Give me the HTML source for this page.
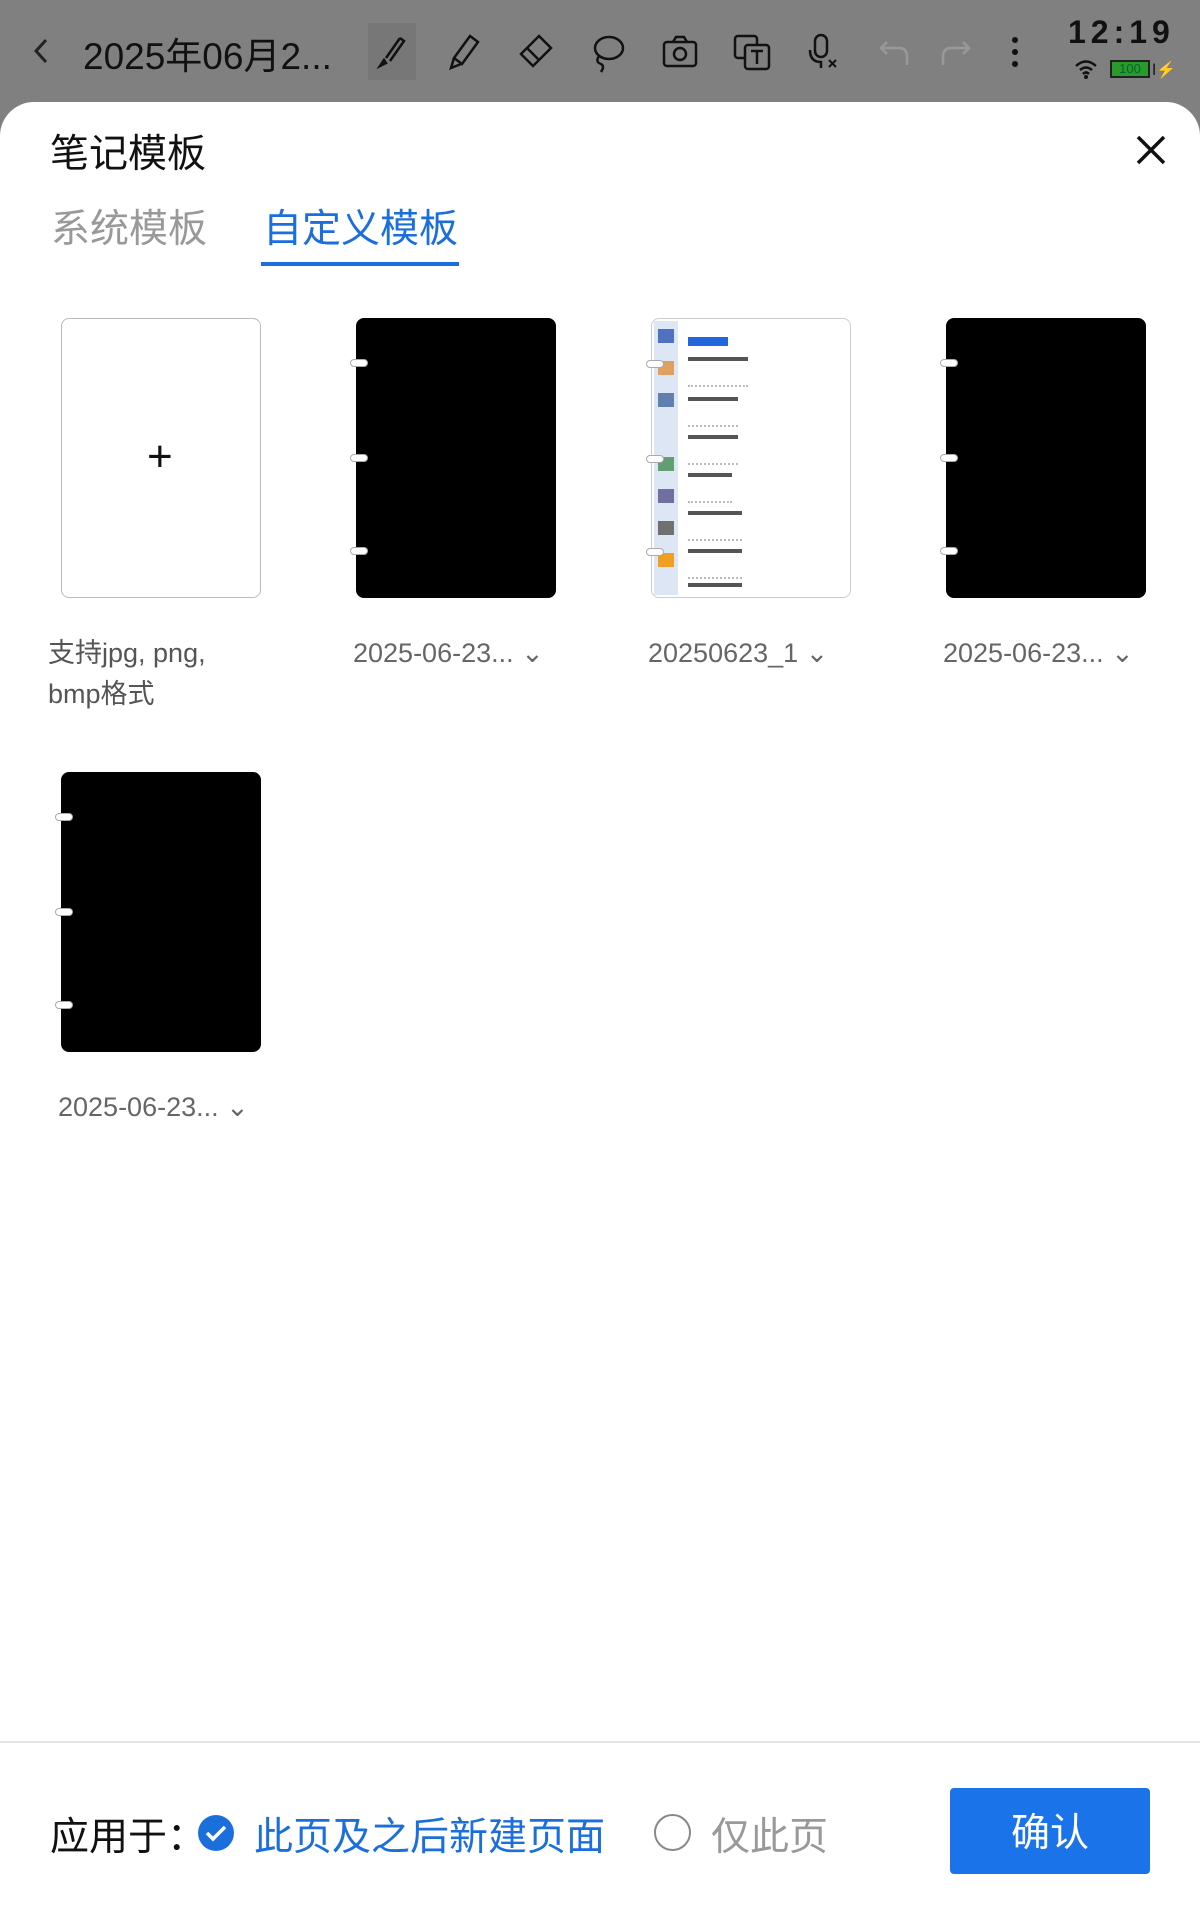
<!DOCTYPE html>
<html><head><meta charset="utf-8"><style>
*{margin:0;padding:0;box-sizing:border-box}
body{width:1200px;height:1920px;position:relative;background:#808080;font-family:"Liberation Sans","Noto Sans CJK SC",sans-serif;overflow:hidden}
.a{position:absolute}
.sheet{position:absolute;left:0;top:102px;width:1200px;height:1818px;background:#fff;border-radius:34px 34px 0 0}
.card{position:absolute;width:200px;height:280px;border-radius:8px}
.blk{background:#000}
.pill{position:absolute;left:-6px;width:18px;height:8px;background:#fff;border-radius:4px;border:1px solid #aaa}
.lbl{position:absolute;font-size:27px;color:#666;white-space:nowrap}
.ic{position:absolute;top:30px;width:44px;height:44px}
svg{display:block}
</style></head><body>
<svg class="a" style="left:30px;top:36px" width="24" height="30" viewBox="0 0 24 30"><path d="M16 4 L6 15 L16 26" stroke="#222" stroke-width="3" fill="none"/></svg>
<div class="a" style="left:83px;top:26px;font-size:37px;color:#111">2025年06月2...</div>
<div class="a" style="left:368px;top:23px;width:48px;height:57px;background:#777"></div>
<svg class="ic" style="left:370px" viewBox="0 0 44 44"><path d="M30 8 L16 28 M14 30 l-4 6 l6 -3 z M30 8 l4 3 l-14 20" stroke="#111" stroke-width="2.5" fill="none"/></svg>
<svg class="ic" style="left:442px" viewBox="0 0 44 44"><path d="M28 6 l8 6 l-16 22 l-8 -6 z M12 28 l-3 10 l10 -4" stroke="#111" stroke-width="2.5" fill="none"/></svg>
<svg class="ic" style="left:513px" viewBox="0 0 44 44"><path d="M26 6 l12 12 l-18 18 l-12 -12 z M14 18 l12 12" stroke="#111" stroke-width="2.5" fill="none"/></svg>
<svg class="ic" style="left:585px" viewBox="0 0 44 44"><ellipse cx="24" cy="18" rx="14" ry="11" stroke="#111" stroke-width="2.5" fill="none"/><path d="M14 26 q-4 6 2 8 q4 2 0 8" stroke="#111" stroke-width="2.5" fill="none"/></svg>
<svg class="ic" style="left:658px" viewBox="0 0 44 44"><rect x="6" y="12" width="32" height="24" rx="3" stroke="#111" stroke-width="2.5" fill="none"/><path d="M15 12 l3-5 h8 l3 5" stroke="#111" stroke-width="2.5" fill="none"/><circle cx="22" cy="24" r="6" stroke="#111" stroke-width="2.5" fill="none"/></svg>
<svg class="ic" style="left:730px" viewBox="0 0 44 44"><rect x="5" y="6" width="22" height="22" rx="3" stroke="#111" stroke-width="2.5" fill="none"/><rect x="15" y="15" width="24" height="24" rx="3" stroke="#111" stroke-width="2.5" fill="#808080"/><path d="M21 21 h12 M27 21 v13" stroke="#111" stroke-width="2.5"/></svg>
<svg class="ic" style="left:801px" viewBox="0 0 44 44"><rect x="14" y="5" width="12" height="22" rx="6" stroke="#111" stroke-width="2.5" fill="none"/><path d="M9 20 q0 12 11 12 v6" stroke="#111" stroke-width="2.5" fill="none"/><path d="M28 30 l7 7 M35 30 l-7 7" stroke="#111" stroke-width="2"/></svg>
<svg class="ic" style="left:873px" viewBox="0 0 44 44"><path d="M14 12 l-6 6 l6 6 M8 18 h18 q8 0 8 9 v8" stroke="#999" stroke-width="2.5" fill="none"/></svg>
<svg class="ic" style="left:933px" viewBox="0 0 44 44"><path d="M30 12 l6 6 l-6 6 M36 18 h-18 q-8 0 -8 9 v8" stroke="#999" stroke-width="2.5" fill="none"/></svg>
<svg class="ic" style="left:993px" viewBox="0 0 44 44"><circle cx="22" cy="10" r="3" fill="#111"/><circle cx="22" cy="22" r="3" fill="#111"/><circle cx="22" cy="34" r="3" fill="#111"/></svg>
<div class="a" style="left:1068px;top:14px;font-size:32px;color:#111;letter-spacing:5px;font-weight:bold">12:19</div>
<svg class="a" style="left:1074px;top:58px" width="24" height="22" viewBox="0 0 24 22"><path d="M2 8 q10 -9 20 0 M6 12 q6 -5 12 0 M9 16 q3 -3 6 0" stroke="#111" stroke-width="2.5" fill="none"/><circle cx="12" cy="19" r="2" fill="#111"/></svg>
<div class="a" style="left:1110px;top:60px;width:40px;height:18px;border:2px solid #222;background:#2a9a2a;font-size:13px;line-height:14px;text-align:center;color:#063">100</div>
<div class="a" style="left:1152px;top:60px;font-size:16px;color:#111">ǀ⚡</div>

<div class="sheet"></div>
<div class="a" style="left:50px;top:123px;font-size:39px;color:#111">笔记模板</div>
<svg class="a" style="left:1135px;top:134px" width="32" height="32" viewBox="0 0 32 32"><path d="M3 3 L29 29 M29 3 L3 29" stroke="#111" stroke-width="3.5"/></svg>
<div class="a" style="left:51px;top:198px;font-size:39px;color:#999">系统模板</div>
<div class="a" style="left:263px;top:198px;font-size:39px;color:#1a6fdc">自定义模板</div>
<div class="a" style="left:261px;top:262px;width:198px;height:4px;background:#1a6fdc"></div>

<div class="card" style="left:61px;top:318px;border:1.5px solid #bbb"><div class="a" style="left:85px;top:120px;font-size:44px;line-height:36px;color:#111">+</div></div>
<div class="lbl" style="left:48px;top:633px;color:#555;line-height:41px">支持jpg, png,<br>bmp格式</div>

<div class="card blk" style="left:356px;top:318px"><div class="pill" style="top:41px"></div><div class="pill" style="top:136px"></div><div class="pill" style="top:229px"></div></div>
<div class="lbl" style="left:353px;top:638px">2025-06-23... ⌄</div>

<div class="card" style="left:651px;top:318px;border:1.5px solid #ccc;overflow:visible">
 <div class="a" style="left:2px;top:2px;width:24px;height:274px;background:#dde6f4"></div>
 <div class="a" style="left:6px;top:10px;width:16px;height:14px;background:#5070c0"></div>
 <div class="a" style="left:6px;top:42px;width:16px;height:14px;background:#e0a060"></div>
 <div class="a" style="left:6px;top:74px;width:16px;height:14px;background:#6080b0"></div>
 <div class="a" style="left:6px;top:138px;width:16px;height:14px;background:#60a070"></div>
 <div class="a" style="left:6px;top:170px;width:16px;height:14px;background:#7070a0"></div>
 <div class="a" style="left:6px;top:202px;width:16px;height:14px;background:#707070"></div>
 <div class="a" style="left:6px;top:234px;width:16px;height:14px;background:#f0a020"></div>
 <div class="a" style="left:36px;top:18px;width:40px;height:9px;background:#2266dd"></div>
 <div class="a" style="left:36px;top:38px;width:60px;height:30px;border-top:4px solid #555;border-bottom:2px dotted #bbb"></div>
 <div class="a" style="left:36px;top:78px;width:50px;height:30px;border-top:4px solid #555;border-bottom:2px dotted #bbb"></div>
 <div class="a" style="left:36px;top:116px;width:50px;height:30px;border-top:4px solid #555;border-bottom:2px dotted #bbb"></div>
 <div class="a" style="left:36px;top:154px;width:44px;height:30px;border-top:4px solid #555;border-bottom:2px dotted #bbb"></div>
 <div class="a" style="left:36px;top:192px;width:54px;height:30px;border-top:4px solid #555;border-bottom:2px dotted #bbb"></div>
 <div class="a" style="left:36px;top:230px;width:54px;height:30px;border-top:4px solid #555;border-bottom:2px dotted #bbb"></div>
 <div class="a" style="left:36px;top:264px;width:54px;height:4px;background:#555"></div>
 <div class="pill" style="top:41px"></div><div class="pill" style="top:136px"></div><div class="pill" style="top:229px"></div>
</div>
<div class="lbl" style="left:648px;top:638px">20250623_1 ⌄</div>

<div class="card blk" style="left:946px;top:318px"><div class="pill" style="top:41px"></div><div class="pill" style="top:136px"></div><div class="pill" style="top:229px"></div></div>
<div class="lbl" style="left:943px;top:638px">2025-06-23... ⌄</div>

<div class="card blk" style="left:61px;top:772px"><div class="pill" style="top:41px"></div><div class="pill" style="top:136px"></div><div class="pill" style="top:229px"></div></div>
<div class="lbl" style="left:58px;top:1092px">2025-06-23... ⌄</div>

<div class="a" style="left:0;top:1741px;width:1200px;height:2px;background:#e4e4e4"></div>
<div class="a" style="left:50px;top:1806px;font-size:39px;color:#111">应用于：</div>
<svg class="a" style="left:197px;top:1814px" width="38" height="38" viewBox="0 0 38 38"><circle cx="19" cy="19" r="18" fill="#1a6fdc"/><path d="M10 19 l6 6 l12 -12" stroke="#fff" stroke-width="3.5" fill="none"/></svg>
<div class="a" style="left:254px;top:1806px;font-size:39px;color:#1a6fdc">此页及之后新建页面</div>
<div class="a" style="left:654px;top:1814px;width:37px;height:37px;border:2px solid #888;border-radius:50%"></div>
<div class="a" style="left:711px;top:1806px;font-size:39px;color:#999">仅此页</div>
<div class="a" style="left:950px;top:1788px;width:200px;height:86px;background:#1a73e8;border-radius:4px;color:#fff;font-size:39px;line-height:92px;text-align:center">确认</div>
</body></html>
